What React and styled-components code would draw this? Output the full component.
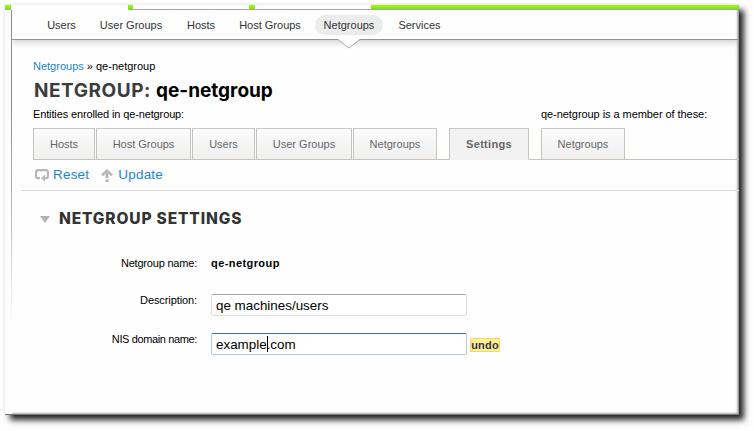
import React from "react";
import styled, { createGlobalStyle } from "styled-components";

const GlobalStyle = createGlobalStyle`
  * { box-sizing: border-box; }
  body {
    margin: 0;
    background: #fefefe;
    font: 11px/14px "Liberation Sans", Arial, sans-serif;
    color: #000;
    overflow: hidden;
  }
`;

const Stage = styled.div`
  height: 431px;
  padding: 5px 15px 16px 5px;
`;

const Frame = styled.div`
  display: flex;
  flex-direction: column;
  height: 410px;
  background: #fefefe;
  box-shadow: 5px 5px 6px rgba(0, 0, 0, 0.85), 0 0 4px rgba(0, 0, 0, 0.08);
  border-right: 1px solid #999;
  border-bottom: 1px solid #777;
`;

const Strip = styled.div`
  display: flex;
  flex: none;
  height: 5px;
  margin-right: -1px;
`;

const StripPart = styled.span`
  width: ${(p) => p.$w}px;
  background: ${(p) => (p.$green ? "linear-gradient(#99ff00, #80e800)" : "#fefefe")};
  border-bottom: 1px solid ${(p) => (p.$line ? "#a5a8a0" : "transparent")};
`;

const Body = styled.div`
  flex: 1;
  margin-left: 6px;
  border-left: 1px solid;
  border-image: linear-gradient(#8c8c8c 0, #8c8c8c 25%, #c4c4c4 55%, #fefefe 78%) 1;
  box-shadow: inset -2px -2px 2px -1px rgba(0, 0, 0, 0.3);
`;

const Nav = styled.nav`
  display: flex;
  align-items: center;
  height: 30px;
  padding-left: 23px;
  border-bottom: 1px solid #949494;
  box-shadow: 0 3px 6px rgba(0, 0, 0, 0.17);
  clip-path: inset(0 0 -12px 0);
  color: #333;
`;

const NavItem = styled.a`
  position: relative;
  display: flex;
  justify-content: center;
  flex: none;
  width: ${(p) => p.$w}px;
  height: 20px;
  line-height: 20px;
  white-space: nowrap;
  border-radius: 10px;
  background: ${(p) => (p.$active ? "#ececec" : "transparent")};
  margin-right: ${(p) => p.$gap || 0}px;
`;

const Pointer = styled.svg`
  position: absolute;
  left: 22px;
  top: 24px;
`;

const Content = styled.main`
  padding-top: 19px;
`;

const Crumbs = styled.div`
  padding-left: 21px;
  height: 14px;
`;

const CrumbLink = styled.a`
  color: #1d85d5;
`;

const Title = styled.h1`
  display: flex;
  gap: 6px;
  height: 24px;
  margin: 6px 0 4px;
  padding-left: 22px;
  font: 700 19px/24px Inter, "Open Sans", sans-serif;
`;

const TitleKind = styled.span`
  width: 116px;
  color: #3c3c3c;
  letter-spacing: 0.55px;
  white-space: nowrap;
`;

const TitleName = styled.span`
  letter-spacing: 0;
`;

const Captions = styled.div`
  display: grid;
  grid-template-columns: 508px 1fr;
  height: 21px;
  padding-left: 21px;
`;

const Caption = styled.span`
  letter-spacing: ${(p) => p.$spacing}px;
`;

const Tabs = styled.div`
  display: flex;
  height: 32px;
  width: 706px;
  margin-left: 21px;
  box-shadow: inset 0 -1px #c9c2b8;
`;

const Tab = styled.div`
  width: ${(p) => p.$w}px;
  height: 32px;
  margin-right: ${(p) => p.$gap || 1}px;
  border: 1px solid #c9c2b8;
  border-top-color: #c8c8c6;
  border-bottom-color: ${(p) => (p.$active ? "#f2f2f2" : "#c9c2b8")};
  background: ${(p) => (p.$active ? "#f2f2f2" : "linear-gradient(#fbfbfb, #f0f0f0)")};
  color: #666;
  font-weight: ${(p) => (p.$active ? 700 : 400)};
  letter-spacing: ${(p) => (p.$active ? "0.3px" : "0")};
  line-height: 31px;
  text-align: center;
`;

const Actions = styled.div`
  display: flex;
  align-items: center;
  height: 31px;
  width: 718px;
  margin-left: 9px;
  padding-left: 14px;
  border-bottom: 1px solid #ddd;
`;

const Action = styled.a`
  display: flex;
  align-items: center;
  gap: ${(p) => p.$gap}px;
  margin-right: 12px;
  color: #1d85d5;
  font-size: 13.5px;
  letter-spacing: 0.2px;
  line-height: 16px;
`;

const SectionTitle = styled.h2`
  display: flex;
  align-items: center;
  gap: 9px;
  height: 20px;
  margin: 18px 0 0;
  padding-left: 28px;
  color: #333;
  font: 800 15.5px/20px Inter, "Open Sans", sans-serif;
`;

const SectionText = styled.span`
  letter-spacing: 0.85px;
  white-space: nowrap;
`;

const Form = styled.div`
  padding-top: 24px;
`;

const Field = styled.div`
  display: grid;
  grid-template-columns: 185px 256px auto;
  column-gap: 14px;
  height: ${(p) => p.$h}px;
`;

const Label = styled.label`
  padding-top: ${(p) => p.$top || 0}px;
  text-align: right;
  letter-spacing: ${(p) => p.$spacing}px;
  margin-top: ${(p) => (p.$top ? 0 : -1)}px;
`;

const Value = styled.strong`
  padding-top: 3px;
  letter-spacing: 0.42px;
  white-space: nowrap;
`;

const Input = styled.div`
  display: flex;
  align-items: center;
  height: 22px;
  padding: 2px 0 0 4px;
  border: 1px solid ${(p) => (p.$focus ? "#abcfe9" : "#dddde6")};
  border-top-color: ${(p) => (p.$focus ? "#397199" : "#a6a6ae")};
  border-radius: 2px;
  background: #fff;
  font-size: 13.4px;
`;

const Caret = styled.span`
  width: 1px;
  height: 16px;
  margin: -2px -1px 0 0;
  background: #000;
`;

const Undo = styled.button`
  width: 30px;
  height: 14px;
  margin: 5px 0 0 -11px;
  padding: 0;
  border: 1px solid #fcdc45;
  background: #fcefa1;
  color: #363636;
  font: 700 11px/12px "Liberation Sans", Arial, sans-serif;
  letter-spacing: 0.2px;
`;

const strip = [
  [6, true, true],
  [117, false, false],
  [5, true, true],
  [116, false, true],
  [6, true, true],
  [116, false, true],
  [368, true, true],
];

const navItems = [
  ["Users", 53, 12],
  ["User Groups", 62, 19],
  ["Hosts", 40, 17],
  ["Host Groups", 64, 13],
  ["Netgroups", 68, 15],
  ["Services", 43, 0],
];

const tabs = [
  ["Hosts", 62],
  ["Host Groups", 95],
  ["Users", 63],
  ["User Groups", 96],
  ["Netgroups", 84, 12],
  ["Settings", 80, 12],
  ["Netgroups", 84],
];

export default function App() {
  return (
    <Stage>
      <GlobalStyle />
      <Frame>
        <Strip>
          {strip.map(([w, green, line], i) => (
            <StripPart key={i} $w={w} $green={green} $line={line} />
          ))}
        </Strip>
        <Body>
          <Nav>
            {navItems.map(([name, w, gap]) => (
              <NavItem key={name} $w={w} $gap={gap} $active={name === "Netgroups"}>
                {name}
                {name === "Netgroups" && (
                  <Pointer width="24" height="10" viewBox="0 0 24 10">
                    <path d="M1 0H23L12 9Z" fill="#fefefe" />
                    <path d="M1 .5L12 9L23 .5" fill="none" stroke="#aaa" />
                  </Pointer>
                )}
              </NavItem>
            ))}
          </Nav>
          <Content>
            <Crumbs>
              <CrumbLink>Netgroups</CrumbLink> » qe-netgroup
            </Crumbs>
            <Title>
              <TitleKind>NETGROUP:</TitleKind>
              <TitleName>qe-netgroup</TitleName>
            </Title>
            <Captions>
              <Caption $spacing={-0.13}>Entities enrolled in qe-netgroup:</Caption>
              <Caption $spacing={-0.06}>qe-netgroup is a member of these:</Caption>
            </Captions>
            <Tabs>
              {tabs.map(([name, w, gap], i) => (
                <Tab key={i} $w={w} $gap={gap} $active={name === "Settings"}>
                  {name}
                </Tab>
              ))}
            </Tabs>
            <Actions>
              <Action $gap={4}>
                <svg width="14" height="13" viewBox="0 0 14 13">
                  <path d="M5 9.2H3Q1.1 9.2 1.1 7.5V3Q1.1 1.2 3 1.2H11Q12.9 1.2 12.9 3V7.5Q12.9 9.2 11 9.2H9.5" fill="none" stroke="#b8b8b8" strokeWidth="2.2" />
                  <path d="M10 5.6V12.8L6 9.2Z" fill="#b8b8b8" />
                </svg>
                Reset
              </Action>
              <Action $gap={5}>
                <svg width="12" height="13" viewBox="0 0 12 13">
                  <path d="M1 6.4L6 1.6L11 6.4" fill="none" stroke="#b8b8b8" strokeWidth="2.6" />
                  <path d="M4.5 2H7.5V9H4.5ZM4.5 10.3H7.5V13H4.5Z" fill="#b8b8b8" />
                </svg>
                Update
              </Action>
            </Actions>
            <SectionTitle>
              <svg width="10" height="7" viewBox="0 0 10 7">
                <path d="M0 0H10L5 7Z" fill="#b3b3b3" />
              </svg>
              <SectionText>NETGROUP SETTINGS</SectionText>
            </SectionTitle>
            <Form>
              <Field $h={41}>
                <Label $top={3} $spacing={-0.2}>Netgroup name:</Label>
                <Value>qe-netgroup</Value>
              </Field>
              <Field $h={39}>
                <Label $spacing={-0.1}>Description:</Label>
                <Input>qe machines/users</Input>
              </Field>
              <Field $h={39}>
                <Label $spacing={-0.37}>NIS domain name:</Label>
                <Input $focus>
                  example<Caret />.com
                </Input>
                <Undo>undo</Undo>
              </Field>
            </Form>
          </Content>
        </Body>
      </Frame>
    </Stage>
  );
}
